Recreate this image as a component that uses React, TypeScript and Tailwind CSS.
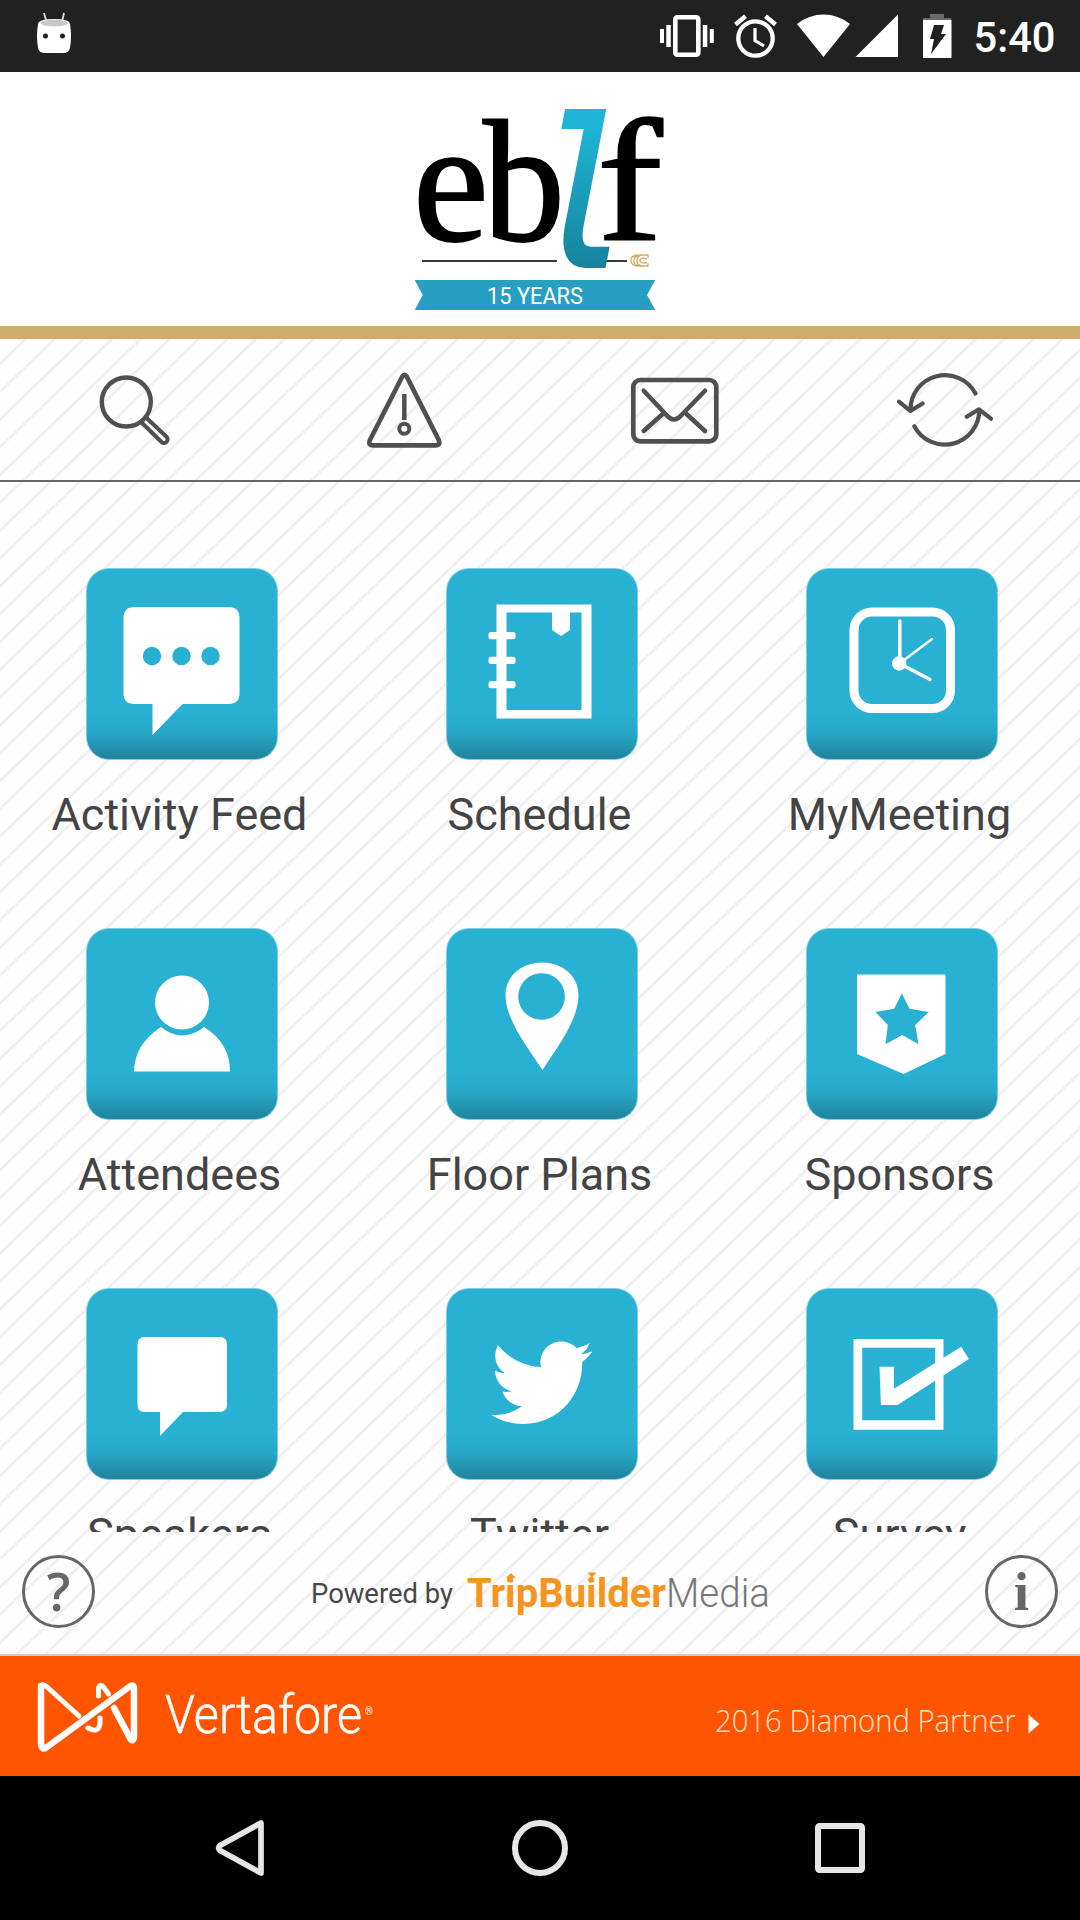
import type { ReactNode } from "react";
import { FaTwitter } from "react-icons/fa";

const StatusBar = () => (
	<div className="h-[72px] bg-[#212121]">
		<svg width="1080" height="72" viewBox="0 0 1080 72" fill="#fff">
			{/* android head */}
			<path d="M38 24q1-5 16-5t16 5q2 12 0 24-1 5-7 5H45q-6 0-7-5-2-12 0-24z" />
			<ellipse cx="54" cy="23" rx="13.500" ry="3.500" fill="#c8c8c8" />
			<path d="M44 13l2.500 9M64 13l-2 9" stroke="#ddd" strokeWidth="1.800" />
			<circle cx="45.500" cy="36" r="2.500" fill="#212121" />
			<circle cx="62.500" cy="36" r="2.500" fill="#212121" />
			{/* vibrate */}
			<rect x="675.300" y="17.300" width="23" height="37.400" rx="2" fill="none" stroke="#fff" strokeWidth="4.600" />
			<path d="M660 29h4v14h-4zM666.300 25h4.500v22h-4.500zM702.800 25h4.500v22h-4.500zM709.800 29h4v14h-4z" />
			{/* alarm */}
			<g fill="none" stroke="#fff">
				<circle cx="755.500" cy="38.500" r="17.200" strokeWidth="4.300" />
				<path d="M735.500 24.500l10-8.300M775.500 24.500l-10-8.300" strokeWidth="4.500" />
				<path d="M755 28v12.500l9 5.500" strokeWidth="3.200" />
			</g>
			{/* wifi, signal */}
			<path d="M823.500 57L797 24q12-9.500 26.500-9.500T850 24z" />
			<path d="M855.500 57h42.500V14.500z" />
			{/* battery */}
			<path d="M923 20v-2h7v-4h14v4h7v2z" fill="#6a6a6a" />
			<path d="M923 20h28.500v38H923z" />
			<path d="M934 25h10l-3 9h5l-15 20 3-15h-4z" fill="#212121" />
			<text x="973.500" y="52" fontFamily="Roboto" fontWeight="500" fontSize="42" textLength="82" lengthAdjust="spacingAndGlyphs">
				5:40
			</text>
		</svg>
	</div>
);

const Logo = () => (
	<svg width="300" height="236" viewBox="0 0 300 236">
		<defs>
			<linearGradient id="teal" x1="0" y1="0" x2="0" y2="1">
				<stop offset="0.200" stopColor="#1fb5d6" />
				<stop offset="0.800" stopColor="#17839c" />
			</linearGradient>
		</defs>
		<path d="M32 171h135M216 171h21" stroke="#333740" strokeWidth="2" />
		<g fontFamily="Liberation Serif, serif" fontSize="174" fill="#000" stroke="#000" strokeWidth="2">
			<text transform="translate(23 149.500) scale(0.980 1)">e</text>
			<text transform="translate(93 149.500) scale(0.940 1)">b</text>
			<text transform="translate(207 149.500) scale(1.130 1)">f</text>
		</g>
		<text
			transform="translate(135 175) skewX(-11) scale(0.780 1)"
			fontFamily="DejaVu Sans Mono, monospace"
			fontSize="200"
			fill="url(#teal)"
			stroke="url(#teal)"
			strokeWidth="6"
		>
			l
		</text>
		<g fill="none" stroke="#d3ac62" strokeWidth="1.300">
			<path d="M248 165q-7 0-7 5.500t7 5.500M251 165q-7 0-7 5.500t7 5.500M258 168v-3h-5q-6 0-6 5.500t6 5.500h5v-3M257 169q-7-2-7 1.500t7 2" />
		</g>
		<path d="M24.700 190h240.600l-8.300 15 8.300 15H24.700l8-15z" fill="#279fc2" />
		<text x="97" y="213.500" fontFamily="Roboto" fontSize="24" fill="#fff" textLength="96" lengthAdjust="spacingAndGlyphs">
			15 YEARS
		</text>
	</svg>
);

const toolbar: { name: string; icon: ReactNode }[] = [
	{
		name: "Search",
		icon: (
			<>
				<circle cx="51.300" cy="52" r="24.500" strokeWidth="4.400" />
				<path d="M66.500 72.500l20 19.500a3.600 3.600 0 0 0 5-5.200l-20.500-19.300" strokeWidth="4" />
			</>
		),
	},
	{
		name: "Alerts",
		icon: (
			<>
				<path d="M57.300 26.500q2.200-3.500 4.400 0L94 90.500q1.500 4.800-3 4.800H27.500q-4.500 0-2.800-4.800z" strokeWidth="4.700" />
				<path d="M59.300 44v26" strokeWidth="4.500" strokeLinecap="butt" />
				<circle cx="59.300" cy="78.700" r="5" strokeWidth="4" />
			</>
		),
	},
	{
		name: "Messages",
		icon: (
			<>
				<rect x="18.300" y="30" width="83" height="61.300" rx="7" strokeWidth="4.700" />
				<path d="M28.700 40.700l23 24.500q7.300 8.500 14.600 0L90 40.700M28.700 81l19-17M90 81L71.500 64" strokeWidth="4.500" />
			</>
		),
	},
	{
		name: "Refresh",
		icon: (
			<>
				<path d="M90.500 43.500A34.500 34.500 0 0 0 25.500 60M14 51.700l11.300 9.300 12.300-7.500" strokeWidth="4.200" />
				<path d="M29.300 76.300A34.500 34.500 0 0 0 94.300 60M81.700 66.700L94 59.300l12 9.400" strokeWidth="4.200" />
			</>
		),
	},
];

const tiles: { name: string; icon: ReactNode }[] = [
	{
		name: "Activity Feed",
		icon: (
			<>
				<path d="M49 39h94q11 0 11 11v75q0 11-11 11H97l-30 31v-31H49q-11 0-11-11V50q0-11 11-11z" />
				<g fill="#29b1d3">
					<circle cx="66.500" cy="88" r="9.200" />
					<circle cx="96" cy="88" r="9.200" />
					<circle cx="125" cy="88" r="9.200" />
				</g>
			</>
		),
	},
	{
		name: "Schedule",
		icon: (
			<g transform="translate(1)">
				<path d="M50 36.500h95v114H50zM60 44.500V142h75V44.500z" fillRule="evenodd" />
				<path d="M105.500 40h18v22l-9 6-9-6z" />
				<rect x="42" y="64" width="27" height="7.300" rx="2.500" />
				<rect x="42" y="88.700" width="27" height="7.300" rx="2.500" />
				<rect x="42" y="113" width="27" height="7.300" rx="2.500" />
			</g>
		),
	},
	{
		name: "MyMeeting",
		icon: (
			<g stroke="#fff" fill="none" strokeLinecap="round">
				<rect x="48.500" y="44" width="96.500" height="96.500" rx="18" strokeWidth="9" />
				<path d="M94.300 95V53M94 95.500l30.500 16" strokeWidth="3.500" />
				<path d="M94 95.500L126.500 71" strokeWidth="2.500" />
				<circle cx="93.700" cy="95.500" r="7.200" fill="#fff" stroke="none" />
			</g>
		),
	},
	{
		name: "Attendees",
		icon: (
			<>
				<circle cx="96.500" cy="74.500" r="27" />
				<path d="M75.500 99q21 17 43 0 26 16 26 44.500h-96Q49 116 75.500 99z" />
			</>
		),
	},
	{
		name: "Floor Plans",
		icon: (
			<path
				d="M96.500 34.500C118 34.500 133 49 133 67c0 24-20 51-36 75C81 118 60 91 60 67c0-18 15-32.500 36.500-32.500zM96 45.200a23.300 23.300 0 1 0 .1 0z"
				fillRule="evenodd"
			/>
		),
	},
	{
		name: "Sponsors",
		icon: (
			<>
				<path d="M51.500 46.500h88.500V126l-42 20-46.500-20z" />
				<path
					d="M96.300 65.300l7.700 15.400 19.300 3.300-13.600 13 3.300 19.300-16.300-9.300L80 116.300 82.300 97 70 84l18.700-3.300z"
					fill="#29b1d3"
				/>
			</>
		),
	},
	{
		name: "Speakers",
		icon: <path d="M59 49h75q7.500 0 7.500 7.500v60q0 7.500-7.500 7.500H97.500l-23 24v-24H59q-7 0-7-7.500v-60Q52 49 59 49z" />,
	},
	{
		name: "Twitter",
		icon: <FaTwitter x="45.500" y="44" size="101.500" color="#fff" />,
	},
	{
		name: "Survey",
		icon: (
			<>
				<path d="M48 51h90v90.700H48zM56.700 59.700v72.600h73V59.700z" fillRule="evenodd" />
				<path d="M74 78.700h14.400v22l67.300-42 7.700 12.300L92 117H75.400z" />
			</>
		),
	},
];

const Tile = ({ name, icon }: { name: string; icon: ReactNode }) => (
	<div className="flex h-[360px] flex-col items-center">
		<div className="ml-[3px] size-48 rounded-[23px] border border-[#7fd0e4] bg-linear-to-b from-[#29b1d3] from-75% via-[#27a5c5] via-87% to-[#1e839d]">
			<svg width="192" height="192" viewBox="0.5 0 192 192" fill="#fff" className="-m-px">
				{icon}
			</svg>
		</div>
		<div className="mt-7 mr-px text-[45px] leading-[53px] text-[#444]">{name}</div>
	</div>
);

const Footer = () => (
	<div className="flex h-[122px] items-center justify-between px-[22px] pb-1">
		<div className="flex size-[73px] items-center justify-center rounded-full border-[3.500px] border-[#666] font-['Open_Sans'] text-[52px] leading-none font-semibold text-[#666]">
			?
		</div>
		<svg width="476" height="70" viewBox="0 0 476 70">
			<text x="9" y="47" fontFamily="Roboto" fontSize="28" fill="#484848" textLength="142" lengthAdjust="spacingAndGlyphs">
				Powered by
			</text>
			<text x="165" y="51" fontFamily="Roboto" fontWeight="700" fontSize="41" fill="#f7941d" textLength="199" lengthAdjust="spacingAndGlyphs">
				TripBuilder
			</text>
			{/* arrow heads over the two i's */}
			<path d="M204 22l5-5 5 5zM285.500 16.500h9l-4.500 5z" fill="#f7941d" />
			<text x="364" y="51" fontFamily="Roboto" fontWeight="300" fontSize="41" fill="#77777a" textLength="104" lengthAdjust="spacingAndGlyphs">
				Media
			</text>
		</svg>
		<div className="flex size-[73px] items-center justify-center rounded-full border-[3.500px] border-[#666] font-['Liberation_Serif'] text-[55px] leading-none font-bold text-[#666]">
			i
		</div>
	</div>
);

const Banner = () => (
	<div className="h-[122px] border-t-2 border-[#c9cdd0] bg-[#ff5500]">
		<svg width="1080" height="120" viewBox="0 0 1080 120" fill="#fff">
			<g fill="none" stroke="#fff" strokeLinejoin="round" strokeLinecap="round">
				<path d="M41 30v58q1 7 6 3l82-60q5-4 5 2v48q-1 6-4 1l-16-30" strokeWidth="6.500" />
				<path d="M41 30q2-3 6 1l32 29M88 72q11 6 12-5v-5M98.500 40v-8q2-5 5-1l5 7" strokeWidth="5" />
			</g>
			<text x="165" y="77" fontFamily="Roboto" fontWeight="300" fontSize="53" stroke="#fff" strokeWidth="0.500" textLength="197" lengthAdjust="spacingAndGlyphs">
				Vertafore
			</text>
			<text x="365" y="59" fontFamily="Roboto" fontSize="10">
				®
			</text>
			<text x="715" y="76" fontFamily="Open Sans" fontWeight="300" fontSize="32" fill="#ffe3cf" textLength="301" lengthAdjust="spacingAndGlyphs">
				2016 Diamond Partner
			</text>
			<path d="M1028.500 58.500v19l11-9.500z" />
		</svg>
	</div>
);

const NavBar = () => (
	<div className="flex h-36 items-center justify-center gap-60 bg-black">
		<svg width="60" height="60" viewBox="0 0 60 60" fill="none" stroke="#e6e6e6" strokeWidth="5.700" strokeLinejoin="round">
			<path d="M51 5v50L10 32.500q-3-2.500 0-5z" />
		</svg>
		<svg width="60" height="60" viewBox="0 0 60 60" fill="none" stroke="#e6e6e6" strokeWidth="6">
			<circle cx="30" cy="30" r="25" />
		</svg>
		<svg width="60" height="60" viewBox="0 0 60 60" fill="none" stroke="#e6e6e6" strokeWidth="6">
			<rect x="8" y="8" width="44" height="44" rx="1.500" />
		</svg>
	</div>
);

const App = () => {
	return (
		<div className="flex h-[1920px] w-[1080px] flex-col overflow-hidden bg-white font-[Roboto,sans-serif]">
			<StatusBar />
			<div className="flex h-[267px] justify-center border-b-[13px] border-[#cfac68] pt-[18px]">
				<Logo />
			</div>

			<div className="flex h-[1315px] flex-col bg-[repeating-linear-gradient(136deg,#fefefe_0px,#fefefe_16px,#f0f0f2_17px,#f0f0f2_18.500px,#fefefe_20px)]">
				<div className="grid h-[143px] grid-cols-4 justify-items-center border-b-2 border-[#666] pt-[11px]">
					{toolbar.map((item) => (
						<svg
							key={item.name}
							width="120"
							height="120"
							viewBox="0 0 120 120"
							fill="none"
							stroke="#505050"
							strokeLinecap="round"
							strokeLinejoin="round"
						>
							{item.icon}
						</svg>
					))}
				</div>

				{/* scrolling tiles, last row is cut by the footer */}
				<div className="grid h-[1050px] grid-cols-3 content-start overflow-hidden pt-[86px]">
					{tiles.map((tile) => (
						<Tile key={tile.name} name={tile.name} icon={tile.icon} />
					))}
				</div>

				<Footer />
			</div>

			<Banner />
			<NavBar />
		</div>
	);
};

export default App;
